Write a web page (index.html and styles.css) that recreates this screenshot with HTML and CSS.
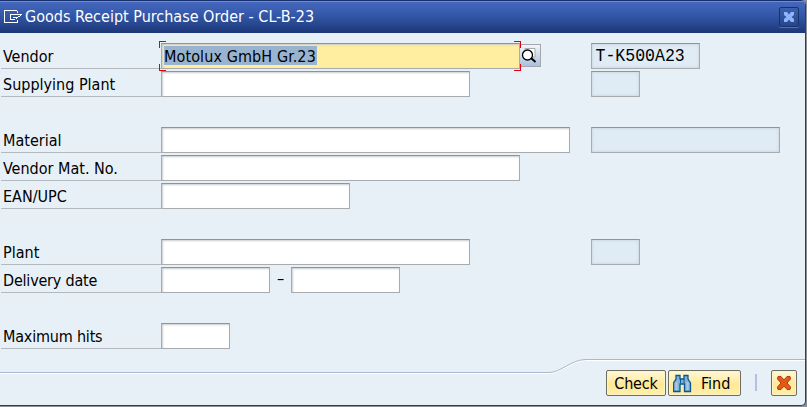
FILE: index.html
```html
<!DOCTYPE html>
<html lang="en">
<head>
<meta charset="utf-8">
<title>Goods Receipt Purchase Order</title>
<link rel="stylesheet" href="styles.css">
</head>
<body>
<div class="dialog">
  <header class="titlebar">
    <svg class="title-icon" width="19" height="14" viewBox="0 0 19 14" fill="none" stroke="#fff" shape-rendering="crispEdges"><path d="M13 .5H.5V12.5H13V10M13 .5V3M6 4.5H18M18 4.5L12 8.500M6 4.500V9.500H11M9 7.500H13"/></svg>
    <h1 class="title">Goods Receipt Purchase Order - CL-B-23</h1>
    <button class="close" aria-label="Close"><svg width="12" height="12" viewBox="0 0 12 12"><path d="M1 1H4L6 3.500L8 1H11V4L8.500 6L11 8V11H8L6 8.500L4 11H1V8L3.500 6L1 4Z" fill="#8fb4fb"/></svg></button>
  </header>
  <main class="form">
    <div class="row"><span class="label">Vendor</span><div class="main"><span class="field vendor w359"><mark class="selected">Motolux GmbH Gr.23</mark><i class="focus"></i></span><button class="search" aria-label="Search"><svg width="18" height="18" viewBox="0 0 18 18"><path d="M5 1.500H15V10H5Z" fill="#fff" stroke="#aaa"/><circle cx="7.500" cy="8" r="5" fill="#fff" stroke="#000" stroke-width="1.300"/><path d="M11 11L15.500 15" stroke="#000" stroke-width="2"/></svg></button></div><span class="field readonly w109"><span class="code">T-K500A23</span></span></div>
    <div class="row"><span class="label">Supplying Plant</span><div class="main"><span class="field w309"></span></div><span class="field readonly w49"></span></div>
    <div class="row group"><span class="label">Material</span><div class="main"><span class="field w409"></span></div><span class="field readonly w189"></span></div>
    <div class="row"><span class="label">Vendor Mat. No.</span><div class="main"><span class="field w359"></span></div></div>
    <div class="row"><span class="label">EAN/UPC</span><div class="main"><span class="field w189"></span></div></div>
    <div class="row group"><span class="label">Plant</span><div class="main"><span class="field w309"></span></div><span class="field readonly w49"></span></div>
    <div class="row"><span class="label tight">Delivery date</span><div class="main"><span class="field w109"></span><span class="dash">–</span><span class="field w109"></span></div></div>
    <div class="row group"><span class="label tight">Maximum hits</span><div class="main"><span class="field w69"></span></div></div>
  </main>
  <footer class="footer">
    <svg class="divider" width="805" height="17" viewBox="0 0 805 17" fill="none"><path d="M0 15.500H549C561 15.500 571 2.500 586 2.500H805" stroke="#fff"/><path d="M0 14.500H549C561 14.500 571 1.500 586 1.500H805" stroke="#a8b9cb"/></svg>
    <div class="actions">
      <button class="btn check">Check</button>
      <button class="btn find"><svg width="19" height="19" viewBox="0 0 19 19"><path d="M3 1.500H7V5H11V1.500H15V5L17.500 9V17.500H11.500V10H7V17.500H.5V9L3 5Z" fill="#86b1d6" stroke="#075a91" stroke-width="1.300"/><path d="M7.500 5V9M11 5V9" stroke="#075a91"/><path d="M3.500 8V16M14.500 8V16" stroke="#a9cae5" stroke-width="2"/></svg><span>Find</span></button>
      <i class="separator"></i>
      <button class="btn cancel" aria-label="Cancel"><svg width="16" height="16" viewBox="0 0 16 16"><path d="M2 1.500H5L8 5L11 1.500H14L14.500 4L11 8L14.500 12L14 14.500H11L8 11L5 14.500H2L1.500 12L5 8L1.500 4Z" fill="#e25a13" stroke="#b03a20"/></svg></button>
    </div>
  </footer>
</div>
</body>
</html>
```
FILE: styles.css
```css
* { box-sizing: border-box; }
body {
  margin: 0;
  width: 807px;
  height: 407px;
  overflow: hidden;
  background: #8d8f96;
  color: #000;
  font: 16px/24px "DejaVu Sans Condensed", "DejaVu Sans", sans-serif;
  font-stretch: condensed;
}
button { padding: 0; font: inherit; color: inherit; }
svg { display: block; }
.dialog {
  display: flex;
  flex-direction: column;
  width: 806px;
  height: 406px;
  background: #e8f0f7;
  border-right: 1px solid #243d7d;
  border-bottom: 1px solid #243d7d;
  border-radius: 0 5px 5px 0;
  overflow: hidden;
}
.titlebar {
  display: flex;
  align-items: center;
  height: 33px;
  padding: 0 6px 0 4px;
  border-top: 1px solid #16306e;
  box-shadow: inset 0 1px #6b8cd6;
  background: linear-gradient(#4669c0, #3357a8 45%, #1c3777);
}
.title-icon { margin-right: 2px; }
.title { flex: 1; margin: 0; color: #fff; font-size: 16px; font-weight: normal; white-space: nowrap; }
.close {
  display: grid;
  place-items: center;
  width: 20px;
  height: 20px;
  border: 1px solid #17326e;
  border-radius: 2px;
  background: linear-gradient(#3c60ad, #25468c);
  box-shadow: 0 1px #5272b4;
}
.form { height: 325px; padding: 10px 0 0 1px; }
.row { display: flex; height: 26px; margin-bottom: 2px; }
.row.group { margin-top: 30px; }
.label { width: 160px; padding-left: 2px; line-height: 28px; border-bottom: 1px solid #b3b8bc; white-space: nowrap; }
.tight { letter-spacing: -.2px; }
.main { display: flex; width: 430px; }
.field {
  position: relative;
  height: 26px;
  border: 1px solid #a9acaf;
  border-top-color: #8f9498;
  background: #fff;
  box-shadow: inset 1px 1px 2px #c9cccf;
}
.readonly { background: #dfebf5; box-shadow: inset 0 0 3px #bccbd6; }
.vendor { padding: 2px; background: #ffee9f; }
.selected { display: block; width: 153px; height: 19px; line-height: 21px; color: #000; background: #99b4d1; letter-spacing: .1px; white-space: nowrap; }
.focus { position: absolute; inset: -3px -2px -3px -3px; }
.focus {
  background:
    linear-gradient(#e00010, #e00010) 0 0 / 7px 1px,
    linear-gradient(#e00010, #e00010) 0 0 / 1px 7px,
    linear-gradient(#e00010, #e00010) 100% 0 / 7px 1px,
    linear-gradient(#e00010, #e00010) 100% 0 / 1px 7px,
    linear-gradient(#e00010, #e00010) 0 100% / 7px 1px,
    linear-gradient(#e00010, #e00010) 0 100% / 1px 7px,
    linear-gradient(#e00010, #e00010) 100% 100% / 7px 1px,
    linear-gradient(#e00010, #e00010) 100% 100% / 1px 7px;
  background-repeat: no-repeat;
}
.search {
  width: 21px;
  height: 23px;
  margin-top: 1px;
  border: 1px solid #a4a8ad;
  border-left: 0;
  background: linear-gradient(#f4f6f9, #a9c0df);
}
.code {
  display: block;
  padding-left: 4px;
  font: 19px/25px "Liberation Mono", monospace;
  transform: scaleX(.87);
  transform-origin: 0 0;
}
.dash { width: 21px; text-align: center; }
.w49 { width: 49px; }
.w69 { width: 69px; }
.w109 { width: 109px; }
.w189 { width: 189px; }
.w309 { width: 309px; }
.w359 { width: 359px; }
.w409 { width: 409px; }
.footer { height: 47px; }
.actions { display: flex; justify-content: flex-end; padding: 0 8px 0 0; margin-top: -5px; }
.btn {
  display: flex;
  align-items: center;
  justify-content: center;
  height: 26px;
  border: 1px solid #6f6c60;
  border-radius: 2px;
  background: linear-gradient(#fff8d8, #ffe998 55%, #ffefac);
  box-shadow: inset 0 0 0 1px #fff3c2;
}
.check { width: 60px; margin-right: 2px; padding-top: 1px; letter-spacing: -.2px; }
.find { width: 73px; justify-content: flex-start; padding-left: 4px; }
.find span { margin: 1px 0 0 9px; }
.separator { width: 2px; height: 17px; margin: 4px 14px 0; background: #afc4dc; }
.cancel { width: 26px; }
```
